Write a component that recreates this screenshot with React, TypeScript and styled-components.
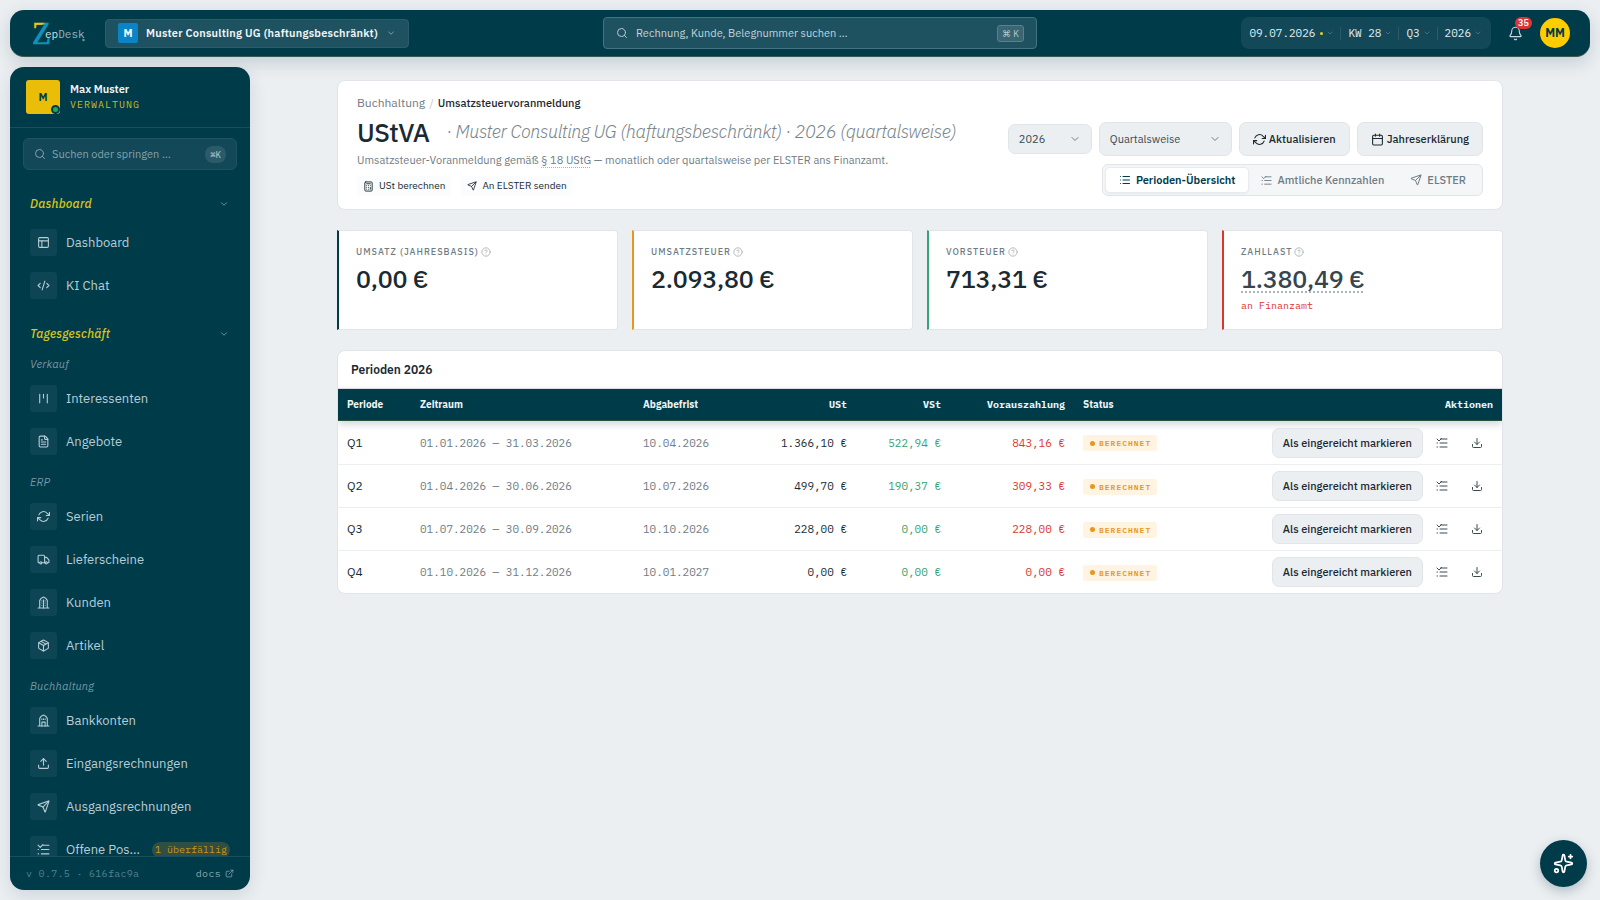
import React from "react";
import styled, { createGlobalStyle, css } from "styled-components";
import {
  Bell,
  Calculator,
  Calendar,
  ChevronDown,
  CircleHelp,
  CodeXml,
  Download,
  ExternalLink,
  FileText,
  List,
  Package,
  PanelsTopLeft,
  Search,
  Send,
  Sparkles,
  Truck,
  Upload,
} from "lucide-react";

const sans = `"IBM Plex Sans", Roboto, "Liberation Sans", sans-serif`;
const mono = `"IBM Plex Mono", "Liberation Mono", monospace`;

const c = {
  petrol: "#003b4a",
  ink: "#1a2a33",
  muted: "#6f7c85",
  line: "#e1e5e9",
  soft: "#ebeff2",
  yellow: "#ffcc00",
  green: "#35a374",
  orange: "#e8961e",
  red: "#e0352b",
};

const GlobalStyle = createGlobalStyle`
  *, *::before, *::after { box-sizing: border-box; }
  body {
    margin: 0;
    background: #ebeff2;
    color: ${c.ink};
    font-family: ${sans};
    font-size: 11px;
    line-height: 16px;
  }
  button, input, select { font: inherit; color: inherit; }
  button { cursor: pointer; border: 0; background: none; padding: 0; }
  a { color: inherit; text-decoration: none; }
  h1, h2, p, ul { margin: 0; padding: 0; }
  ul { list-style: none; }
  svg { display: block; flex: none; }
`;

const Shell = styled.div`
  height: 100vh;
  padding: 10px;
  display: flex;
  flex-direction: column;
  gap: 10px;
`;

/* ---------- top bar ---------- */

const TopBar = styled.header`
  flex: none;
  height: 47px;
  padding: 0 20px 0 22px;
  display: grid;
  grid-template-columns: minmax(0, 571fr) minmax(200px, 434px) minmax(0, 533fr);
  align-items: center;
  border-radius: 14px;
  border-bottom: 1px solid #3a5b50;
  background: ${c.petrol};
  color: #e3edf0;
  box-shadow: 0 6px 18px rgba(0, 40, 55, 0.16);
`;

const BarSide = styled.div<{ $end?: boolean }>`
  display: flex;
  align-items: center;
  justify-content: ${(p) => (p.$end ? "flex-end" : "flex-start")};
`;

const CompanyButton = styled.button`
  height: 29px;
  margin-left: 19px;
  padding: 0 12px;
  display: flex;
  align-items: center;
  gap: 8px;
  border: 1px solid #2c5b69;
  border-radius: 4px;
  background: #1f5261;
  color: #f1f6f8;
  font-weight: 600;
  letter-spacing: 0.02em;
  white-space: nowrap;
  svg { opacity: 0.55; }
`;

const CompanyMark = styled.span`
  width: 20px;
  height: 20px;
  display: grid;
  place-items: center;
  border-radius: 2px;
  background: #0a84c6;
  color: #fff;
  font-weight: 700;
`;

const SearchField = styled.label<{ $compact?: boolean }>`
  height: 32px;
  display: flex;
  align-items: center;
  gap: 8px;
  padding: 0 12px;
  border: 1px solid #447382;
  border-radius: 4px;
  background: #1f5261;
  color: #b9ccd3;
  input {
    flex: 1;
    min-width: 0;
    padding: 0;
    border: 0;
    outline: 0;
    background: none;
  }
  input::placeholder { color: #c3d3d9; opacity: 1; }
  ${(p) =>
    p.$compact &&
    css`
      margin: 10px 13px 0;
      padding: 0 10px;
      gap: 6px;
      border-color: #1f5361;
      border-radius: 6px;
      background: #124858;
      color: #86a3ac;
      input::placeholder { color: #86a3ac; }
    `}
`;

const Kbd = styled.kbd<{ $round?: boolean }>`
  height: 17px;
  padding: 0 4px;
  display: grid;
  place-items: center;
  border: 1px solid ${(p) => (p.$round ? "transparent" : "#58808d")};
  border-radius: ${(p) => (p.$round ? "8px" : "3px")};
  background: ${(p) => (p.$round ? "#2b5a69" : "#3a6673")};
  color: #b9ccd3;
  font-family: ${(p) => (p.$round ? mono : sans)};
  font-size: 9px;
`;

const PeriodGroup = styled.div`
  height: 32px;
  display: flex;
  align-items: center;
  padding: 0 3px 0 1px;
  border-radius: 8px;
  background: #124858;
`;

const PeriodButton = styled.button`
  height: 13px;
  padding: 0 6px 0 7px;
  display: flex;
  align-items: center;
  gap: 3px;
  font-family: ${mono};
  line-height: 13px;
  white-space: nowrap;
  color: #e3edf0;
  & + & { border-left: 1px solid #2b5a69; }
  svg { opacity: 0.35; }
`;

const TodayDot = styled.i`
  width: 3px;
  height: 3px;
  margin-left: 2px;
  border-radius: 50%;
  background: ${c.yellow};
`;

const BellButton = styled.button`
  position: relative;
  margin: 0 17px;
  color: #c9d8dd;
`;

const BellCount = styled.span`
  position: absolute;
  left: 7px;
  top: -9px;
  width: 17px;
  height: 12px;
  border-radius: 6px;
  background: #dc3535;
  color: #fff;
  font-size: 9px;
  font-weight: 600;
  line-height: 12px;
`;

const UserButton = styled.button`
  width: 30px;
  height: 30px;
  border-radius: 50%;
  background: ${c.yellow};
  color: ${c.petrol};
  font-size: 12px;
  font-weight: 700;
`;

/* ---------- side bar ---------- */

const Body = styled.div`
  flex: 1;
  min-height: 0;
  display: flex;
`;

const SideBar = styled.nav`
  flex: none;
  width: 240px;
  display: flex;
  flex-direction: column;
  overflow: hidden;
  border-radius: 14px;
  background: ${c.petrol};
  color: #b8cdd5;
  box-shadow: 0 6px 18px rgba(0, 40, 55, 0.12);
`;

const Profile = styled.div`
  flex: none;
  height: 61px;
  padding: 13px 16px 0;
  display: flex;
  gap: 10px;
  border-bottom: 1px solid #1a4e5c;
`;

const ProfileMark = styled.span`
  position: relative;
  width: 34px;
  height: 34px;
  display: grid;
  place-items: center;
  border-radius: 3px;
  background: #e9bd08;
  color: ${c.petrol};
  font-weight: 700;
  &::after {
    content: "";
    position: absolute;
    right: 0;
    bottom: 0;
    width: 9px;
    height: 9px;
    border: 2px solid ${c.petrol};
    border-radius: 50%;
    background: #1fa866;
  }
`;

const ProfileText = styled.div`
  padding-top: 1px;
  color: #f1f6f8;
  font-weight: 600;
`;

const Role = styled.div`
  color: #c9bb1f;
  font-family: ${mono};
  font-size: 10px;
  font-weight: 400;
  letter-spacing: 1px;
`;

const NavScroll = styled.div`
  flex: 1;
  min-height: 0;
  overflow: hidden;
  padding: 17px 20px 0;
`;

const GroupButton = styled.button`
  width: 100%;
  height: 34px;
  padding-right: 1px;
  display: flex;
  align-items: center;
  justify-content: space-between;
  color: #d9c514;
  font-size: 12px;
  font-style: italic;
  font-weight: 500;
  letter-spacing: 0.02em;
  svg { color: #86a3ac; }
  ul + & { margin-top: 10px; }
`;

const SubHead = styled.h2`
  height: 26px;
  color: #7897a1;
  font-size: 11px;
  font-style: italic;
  font-weight: 400;
  line-height: 26px;
  letter-spacing: 0.02em;
  ul + & { margin-top: 6px; }
`;

const NavLink = styled.a`
  height: 43px;
  display: flex;
  align-items: center;
  gap: 9px;
  font-size: 13px;
  white-space: nowrap;
`;

const NavIcon = styled.span`
  flex: none;
  width: 27px;
  height: 27px;
  display: grid;
  place-items: center;
  border-radius: 3px;
  background: #0d4554;
`;

const NavLabel = styled.span`
  flex: 1;
  overflow: hidden;
  text-overflow: ellipsis;
`;

const Overdue = styled.span`
  padding: 0 3px;
  border-radius: 8px;
  background: #2f4f45;
  color: #c9960f;
  font-family: ${mono};
  font-size: 10px;
  line-height: 16px;
`;

const SideFoot = styled.footer`
  flex: none;
  height: 34px;
  padding: 0 16px;
  display: flex;
  align-items: center;
  justify-content: space-between;
  border-top: 1px solid #1a4e5c;
  color: #54808c;
  font-family: ${mono};
  font-size: 10px;
  letter-spacing: 0.03em;
  a {
    display: flex;
    align-items: center;
    gap: 4px;
    color: #8ba8b1;
  }
`;

/* ---------- content ---------- */

const Main = styled.main`
  flex: 1;
  min-width: 0;
  padding: 13px 20px;
`;

const Column = styled.div`
  max-width: 1166px;
  margin: 0 auto;
  display: flex;
  flex-direction: column;
  gap: 20px;
`;

const Card = styled.section`
  border: 1px solid ${c.line};
  border-radius: 8px;
  background: #fff;
`;

const Hero = styled(Card)`
  min-height: 130px;
  padding: 10px 19px 13px;
  display: flex;
  justify-content: space-between;
  align-items: flex-end;
`;

const Crumbs = styled.nav`
  display: flex;
  gap: 4px;
  color: ${c.muted};
  font-size: 12px;
  line-height: 20px;
  i { color: #c5ccd1; font-style: normal; }
  b { color: ${c.ink}; font-size: 11px; font-weight: 500; }
`;

const Title = styled.h1`
  display: flex;
  align-items: center;
  gap: 17px;
  font-size: 26px;
  font-weight: 500;
  line-height: 38px;
  letter-spacing: -0.02em;
  white-space: nowrap;
  small {
    color: #78848c;
    font-size: 18px;
    font-style: italic;
    font-weight: 300;
    letter-spacing: -0.02em;
  }
`;

const Lead = styled.p`
  color: ${c.muted};
  line-height: 18px;
  abbr { text-decoration: underline dotted #a9b2b8; text-underline-offset: 3px; }
`;

const Steps = styled.div`
  margin-top: 7px;
  display: flex;
  gap: 10px;
`;

const Step = styled.button`
  height: 20px;
  padding: 0 6px;
  display: flex;
  align-items: center;
  gap: 5px;
  border-radius: 4px;
  background: #fafcfd;
  font-size: 10px;
`;

const Controls = styled.div`
  display: flex;
  flex-direction: column;
  align-items: flex-end;
  gap: 8px;
`;

const ControlRow = styled.div`
  display: flex;
  align-items: center;
  gap: 7px;
`;

const Picker = styled.label<{ $width: number; $height: number }>`
  position: relative;
  width: ${(p) => p.$width}px;
  select {
    width: 100%;
    height: ${(p) => p.$height}px;
    padding: 0 10px;
    appearance: none;
    border: 1px solid ${c.line};
    border-radius: 7px;
    background: ${c.soft};
    color: #3c4a53;
  }
  svg {
    position: absolute;
    right: 11px;
    top: calc(50% - 6px);
    color: ${c.muted};
    pointer-events: none;
  }
`;

const SoftButton = styled.button<{ $height: number }>`
  height: ${(p) => p.$height}px;
  padding: 0 ${(p) => (p.$height > 30 ? 13 : 10)}px;
  display: flex;
  align-items: center;
  gap: 3px;
  border: 1px solid ${c.line};
  border-radius: 7px;
  background: ${c.soft};
  font-weight: 500;
  white-space: nowrap;
`;

const Tabs = styled.div`
  height: 32px;
  padding: 3px;
  display: flex;
  border: 1px solid ${c.line};
  border-radius: 6px;
  background: #f4f6f8;
`;

const Tab = styled.button`
  padding: 0 13px;
  display: flex;
  align-items: center;
  gap: 5px;
  border-radius: 4px;
  color: ${c.muted};
  font-weight: 500;
  &[aria-selected="true"] {
    background: #fff;
    color: ${c.petrol};
    font-weight: 600;
    box-shadow: 0 0 0 1px #e8ecef, 0 1px 3px rgba(0, 40, 55, 0.12);
  }
`;

const Kpis = styled.div`
  display: grid;
  grid-template-columns: repeat(4, minmax(0, 1fr));
  gap: 14px;
`;

const Kpi = styled.article<{ $tone: string }>`
  min-height: 100px;
  padding: 12px 17px;
  border: 1px solid ${c.line};
  border-left: 2px solid ${(p) => p.$tone};
  border-radius: 0 4px 4px 0;
  background: #fff;
`;

const KpiLabel = styled.div`
  display: flex;
  align-items: center;
  gap: 2px;
  color: ${c.muted};
  font-size: 9px;
  font-weight: 500;
  line-height: 18px;
  letter-spacing: 1px;
  text-transform: uppercase;
  svg { opacity: 0.6; }
`;

const KpiValue = styled.div<{ $hint?: boolean }>`
  font-size: 25px;
  font-weight: 500;
  line-height: 36px;
  letter-spacing: -0.01em;
  ${(p) =>
    p.$hint &&
    css`
      color: #37454e;
      text-decoration: underline dotted #aab3b9 2px;
      text-underline-offset: 3px;
    `}
`;

const KpiNote = styled.div`
  margin-top: 2px;
  color: ${c.red};
  font-family: ${mono};
  font-size: 10px;
  line-height: 14px;
`;

const TableCard = styled(Card)`
  overflow: hidden;
`;

const TableTitle = styled.h2`
  padding: 0 13px;
  font-size: 12px;
  font-weight: 600;
  line-height: 37px;
  border-bottom: 1px solid ${c.line};
`;

const Table = styled.table`
  width: 100%;
  table-layout: fixed;
  border-collapse: separate;
  border-spacing: 0;
  font-family: ${mono};
  font-size: 11px;
  th {
    height: 32px;
    padding: 0 9px;
    border-bottom: 1px solid #2f4f3d;
    background: ${c.petrol};
    color: #eef4f6;
    font-size: 10px;
    font-weight: 700;
  }
  thead { box-shadow: 0 3px 8px rgba(0, 40, 55, 0.2); }
  td {
    height: 43px;
    padding: 0 9px;
    white-space: nowrap;
  }
  tr + tr td { border-top: 1px solid ${c.soft}; }
`;

const Th = styled.th<{ $num?: boolean }>`
  font-family: ${(p) => (p.$num ? mono : sans)};
  text-align: ${(p) => (p.$num ? "right" : "left")};
`;

const Td = styled.td<{ $num?: boolean; $color?: string; $sans?: boolean }>`
  color: ${(p) => p.$color ?? c.ink};
  text-align: ${(p) => (p.$num ? "right" : "left")};
  ${(p) => p.$sans && css`font-family: ${sans}; font-size: 12px;`}
`;

const Status = styled.span`
  height: 16px;
  padding: 0 6px 0 7px;
  display: inline-flex;
  align-items: center;
  gap: 4px;
  border-radius: 3px;
  background: #fff3e2;
  color: ${c.orange};
  font-family: ${mono};
  font-size: 8px;
  font-weight: 600;
  letter-spacing: 1px;
  vertical-align: middle;
  &::before {
    content: "";
    width: 5px;
    height: 5px;
    border-radius: 50%;
    background: ${c.orange};
  }
`;

const Actions = styled.div`
  display: flex;
  justify-content: flex-end;
  align-items: center;
  gap: 3px;
  font-family: ${sans};
`;

const IconButton = styled.button`
  width: 32px;
  height: 30px;
  display: grid;
  place-items: center;
  color: #3c4a53;
`;

const Fab = styled.button`
  position: fixed;
  right: 13px;
  bottom: 13px;
  width: 47px;
  height: 47px;
  display: grid;
  place-items: center;
  border-radius: 50%;
  background: ${c.petrol};
  color: #fff;
  box-shadow: 0 4px 12px rgba(0, 40, 55, 0.25);
`;

/* ---------- drawings ---------- */

type IconProps = { size?: number; strokeWidth?: number };

const Glyph = ({
  size = 12,
  strokeWidth = 2,
  children,
}: IconProps & { children: React.ReactNode }) => (
  <svg
    width={size}
    height={size}
    viewBox="0 0 24 24"
    fill="none"
    stroke="currentColor"
    strokeWidth={strokeWidth}
    strokeLinecap="round"
    strokeLinejoin="round"
    aria-hidden="true"
  >
    {children}
  </svg>
);

const Checklist = (p: IconProps) => (
  <Glyph {...p}>
    <path d="M9 4h13M8 12h14M8 20h14M2 12h1M2 20h1M2 4l4 4 5-5" />
  </Glyph>
);

const Columns = (p: IconProps) => (
  <Glyph {...p}>
    <path d="M5 4v16M12 4v7M19 4v16" />
  </Glyph>
);

const Refresh = (p: IconProps) => (
  <Glyph {...p}>
    <path d="M23 4v6h-6M1 20v-6h6" />
    <path d="M3.5 9a9 9 0 0 1 14.9-3.4L23 10M1 14l4.6 4.4A9 9 0 0 0 20.5 15" />
  </Glyph>
);

const Office = (p: IconProps) => (
  <Glyph {...p}>
    <path d="M2 22h20M5 22V8l3-4 4-2 4 2 3 4v14" />
    <path d="M9 9v0M15 9v0M9 13v0M15 13v0M9 17v0M15 17v0M12 7v15" />
  </Glyph>
);

const Bank = (p: IconProps) => (
  <Glyph {...p}>
    <path d="M2 22h20M5 22V8l3-4 4-2 4 2 3 4v14" />
    <path d="M9 9v1M15 9v1M12 9v1M9 22v-7h6v7" />
  </Glyph>
);

const LogoBox = styled.svg`
  overflow: visible;
`;

const Logo = () => (
  <LogoBox width="54" height="26" viewBox="0 0 54 26" role="img" aria-label="ZepDesk">
    <defs>
      <linearGradient id="zep" gradientUnits="userSpaceOnUse" x1="0" y1="2" x2="18" y2="24">
        <stop offset="0.28" stopColor="#f2c40c" />
        <stop offset="0.34" stopColor="#1192bd" />
      </linearGradient>
    </defs>
    <text
      x="0"
      y="24"
      fontFamily="Liberation Serif"
      fontSize="31"
      fill="url(#zep)"
      stroke="url(#zep)"
      strokeWidth="0.6"
    >
      Z
    </text>
    <text x="13" y="18" fontFamily="IBM Plex Mono, Liberation Mono" fontSize="11" fill="#d5e1e5">
      ep<tspan fill="#9cb6bf">Desk</tspan>
    </text>
    <circle cx="51.500" cy="20" r="1.300" fill="#5f93a3" />
  </LogoBox>
);

/* ---------- data ---------- */

type NavItem = { label: string; icon: React.ComponentType<any>; badge?: string };

const dashboard: NavItem[] = [
  { label: "Dashboard", icon: PanelsTopLeft },
  { label: "KI Chat", icon: CodeXml },
];

const daily: { head: string; items: NavItem[] }[] = [
  {
    head: "Verkauf",
    items: [
      { label: "Interessenten", icon: Columns },
      { label: "Angebote", icon: FileText },
    ],
  },
  {
    head: "ERP",
    items: [
      { label: "Serien", icon: Refresh },
      { label: "Lieferscheine", icon: Truck },
      { label: "Kunden", icon: Office },
      { label: "Artikel", icon: Package },
    ],
  },
  {
    head: "Buchhaltung",
    items: [
      { label: "Bankkonten", icon: Bank },
      { label: "Eingangsrechnungen", icon: Upload },
      { label: "Ausgangsrechnungen", icon: Send },
      { label: "Offene Posten", icon: Checklist, badge: "1 überfällig" },
    ],
  },
];

const kpis = [
  { label: "Umsatz (Jahresbasis)", value: "0,00 €", tone: c.petrol },
  { label: "Umsatzsteuer", value: "2.093,80 €", tone: c.orange },
  { label: "Vorsteuer", value: "713,31 €", tone: c.green },
  { label: "Zahllast", value: "1.380,49 €", tone: c.red, note: "an Finanzamt" },
];

const periods = [
  ["Q1", "01.01.2026 — 31.03.2026", "10.04.2026", "1.366,10 €", "522,94 €", "843,16 €"],
  ["Q2", "01.04.2026 — 30.06.2026", "10.07.2026", "499,70 €", "190,37 €", "309,33 €"],
  ["Q3", "01.07.2026 — 30.09.2026", "10.10.2026", "228,00 €", "0,00 €", "228,00 €"],
  ["Q4", "01.10.2026 — 31.12.2026", "10.01.2027", "0,00 €", "0,00 €", "0,00 €"],
];

const NavList = ({ items }: { items: NavItem[] }) => (
  <ul>
    {items.map(({ label, icon: Icon, badge }) => (
      <li key={label}>
        <NavLink href="#">
          <NavIcon>
            <Icon size={13} strokeWidth={2} />
          </NavIcon>
          <NavLabel>{label}</NavLabel>
          {badge && <Overdue>{badge}</Overdue>}
        </NavLink>
      </li>
    ))}
  </ul>
);

export default function App() {
  return (
    <>
      <GlobalStyle />
      <Shell>
        <TopBar>
          <BarSide>
            <Logo />
            <CompanyButton>
              <CompanyMark>M</CompanyMark>
              Muster Consulting UG (haftungsbeschränkt)
              <ChevronDown size={10} />
            </CompanyButton>
          </BarSide>
          <SearchField>
            <Search size={12} />
            <input aria-label="Suche" placeholder="Rechnung, Kunde, Belegnummer suchen …" />
            <Kbd>⌘ K</Kbd>
          </SearchField>
          <BarSide $end>
            <PeriodGroup>
              <PeriodButton>
                09.07.2026
                <TodayDot />
                <ChevronDown size={8} />
              </PeriodButton>
              <PeriodButton>
                KW 28
                <ChevronDown size={8} />
              </PeriodButton>
              <PeriodButton>
                Q3
                <ChevronDown size={8} />
              </PeriodButton>
              <PeriodButton>
                2026
                <ChevronDown size={8} />
              </PeriodButton>
            </PeriodGroup>
            <BellButton aria-label="Benachrichtigungen">
              <Bell size={15} strokeWidth={1.8} />
              <BellCount>35</BellCount>
            </BellButton>
            <UserButton>MM</UserButton>
          </BarSide>
        </TopBar>

        <Body>
          <SideBar>
            <Profile>
              <ProfileMark>M</ProfileMark>
              <ProfileText>
                Max Muster
                <Role>VERWALTUNG</Role>
              </ProfileText>
            </Profile>
            <SearchField $compact>
              <Search size={12} />
              <input aria-label="Suchen oder springen" placeholder="Suchen oder springen …" />
              <Kbd $round>⌘K</Kbd>
            </SearchField>
            <NavScroll>
              <GroupButton>
                Dashboard
                <ChevronDown size={10} />
              </GroupButton>
              <NavList items={dashboard} />
              <GroupButton>
                Tagesgeschäft
                <ChevronDown size={10} />
              </GroupButton>
              {daily.map((g) => (
                <React.Fragment key={g.head}>
                  <SubHead>{g.head}</SubHead>
                  <NavList items={g.items} />
                </React.Fragment>
              ))}
            </NavScroll>
            <SideFoot>
              v 0.7.5 · 616fac9a
              <a href="#">
                docs <ExternalLink size={9} />
              </a>
            </SideFoot>
          </SideBar>

          <Main>
            <Column>
              <Hero>
                <div>
                  <Crumbs aria-label="Brotkrumen">
                    <a href="#">Buchhaltung</a>
                    <i>/</i>
                    <b>Umsatzsteuervoranmeldung</b>
                  </Crumbs>
                  <Title>
                    UStVA
                    <small>· Muster Consulting UG (haftungsbeschränkt) · 2026 (quartalsweise)</small>
                  </Title>
                  <Lead>
                    Umsatzsteuer-Voranmeldung gemäß <abbr>§ 18 UStG</abbr> — monatlich oder
                    quartalsweise per ELSTER ans Finanzamt.
                  </Lead>
                  <Steps>
                    <Step>
                      <Calculator size={11} />
                      USt berechnen
                    </Step>
                    <Step>
                      <Send size={10} />
                      An ELSTER senden
                    </Step>
                  </Steps>
                </div>
                <Controls>
                  <ControlRow>
                    <Picker $width={84} $height={30}>
                      <select aria-label="Jahr">
                        <option>2026</option>
                      </select>
                      <ChevronDown size={12} />
                    </Picker>
                    <Picker $width={133} $height={34}>
                      <select aria-label="Turnus">
                        <option>Quartalsweise</option>
                      </select>
                      <ChevronDown size={12} />
                    </Picker>
                    <SoftButton $height={34}>
                      <Refresh size={13} />
                      Aktualisieren
                    </SoftButton>
                    <SoftButton $height={34}>
                      <Calendar size={13} />
                      Jahreserklärung
                    </SoftButton>
                  </ControlRow>
                  <Tabs role="tablist">
                    <Tab role="tab" aria-selected="true">
                      <List size={12} />
                      Perioden-Übersicht
                    </Tab>
                    <Tab role="tab" aria-selected="false">
                      <Checklist size={11} />
                      Amtliche Kennzahlen
                    </Tab>
                    <Tab role="tab" aria-selected="false">
                      <Send size={12} />
                      ELSTER
                    </Tab>
                  </Tabs>
                </Controls>
              </Hero>

              <Kpis>
                {kpis.map((k) => (
                  <Kpi key={k.label} $tone={k.tone}>
                    <KpiLabel>
                      {k.label}
                      <CircleHelp size={10} />
                    </KpiLabel>
                    <KpiValue $hint={!!k.note}>{k.value}</KpiValue>
                    {k.note && <KpiNote>{k.note}</KpiNote>}
                  </Kpi>
                ))}
              </Kpis>

              <TableCard>
                <TableTitle>Perioden 2026</TableTitle>
                <Table>
                  <colgroup>
                    <col width="73" />
                    <col width="223" />
                    <col width="120" />
                    <col width="102" />
                    <col width="94" />
                    <col width="124" />
                    <col width="120" />
                    <col />
                  </colgroup>
                  <thead>
                    <tr>
                      <Th>Periode</Th>
                      <Th>Zeitraum</Th>
                      <Th>Abgabefrist</Th>
                      <Th $num>USt</Th>
                      <Th $num>VSt</Th>
                      <Th $num>Vorauszahlung</Th>
                      <Th>Status</Th>
                      <Th $num>Aktionen</Th>
                    </tr>
                  </thead>
                  <tbody>
                    {periods.map(([q, range, due, ust, vst, pay]) => (
                      <tr key={q}>
                        <Td $sans>{q}</Td>
                        <Td $color={c.muted}>{range}</Td>
                        <Td $color={c.muted}>{due}</Td>
                        <Td $num>{ust}</Td>
                        <Td $num $color={c.green}>{vst}</Td>
                        <Td $num $color={c.red}>{pay}</Td>
                        <Td>
                          <Status>BERECHNET</Status>
                        </Td>
                        <Td>
                          <Actions>
                            <SoftButton $height={30}>Als eingereicht markieren</SoftButton>
                            <IconButton aria-label="Kennzahlen">
                              <Checklist size={12} />
                            </IconButton>
                            <IconButton aria-label="Herunterladen">
                              <Download size={12} />
                            </IconButton>
                          </Actions>
                        </Td>
                      </tr>
                    ))}
                  </tbody>
                </Table>
              </TableCard>
            </Column>
          </Main>
        </Body>
      </Shell>
      <Fab aria-label="KI-Assistent">
        <Sparkles size={21} strokeWidth={2} />
      </Fab>
    </>
  );
}
